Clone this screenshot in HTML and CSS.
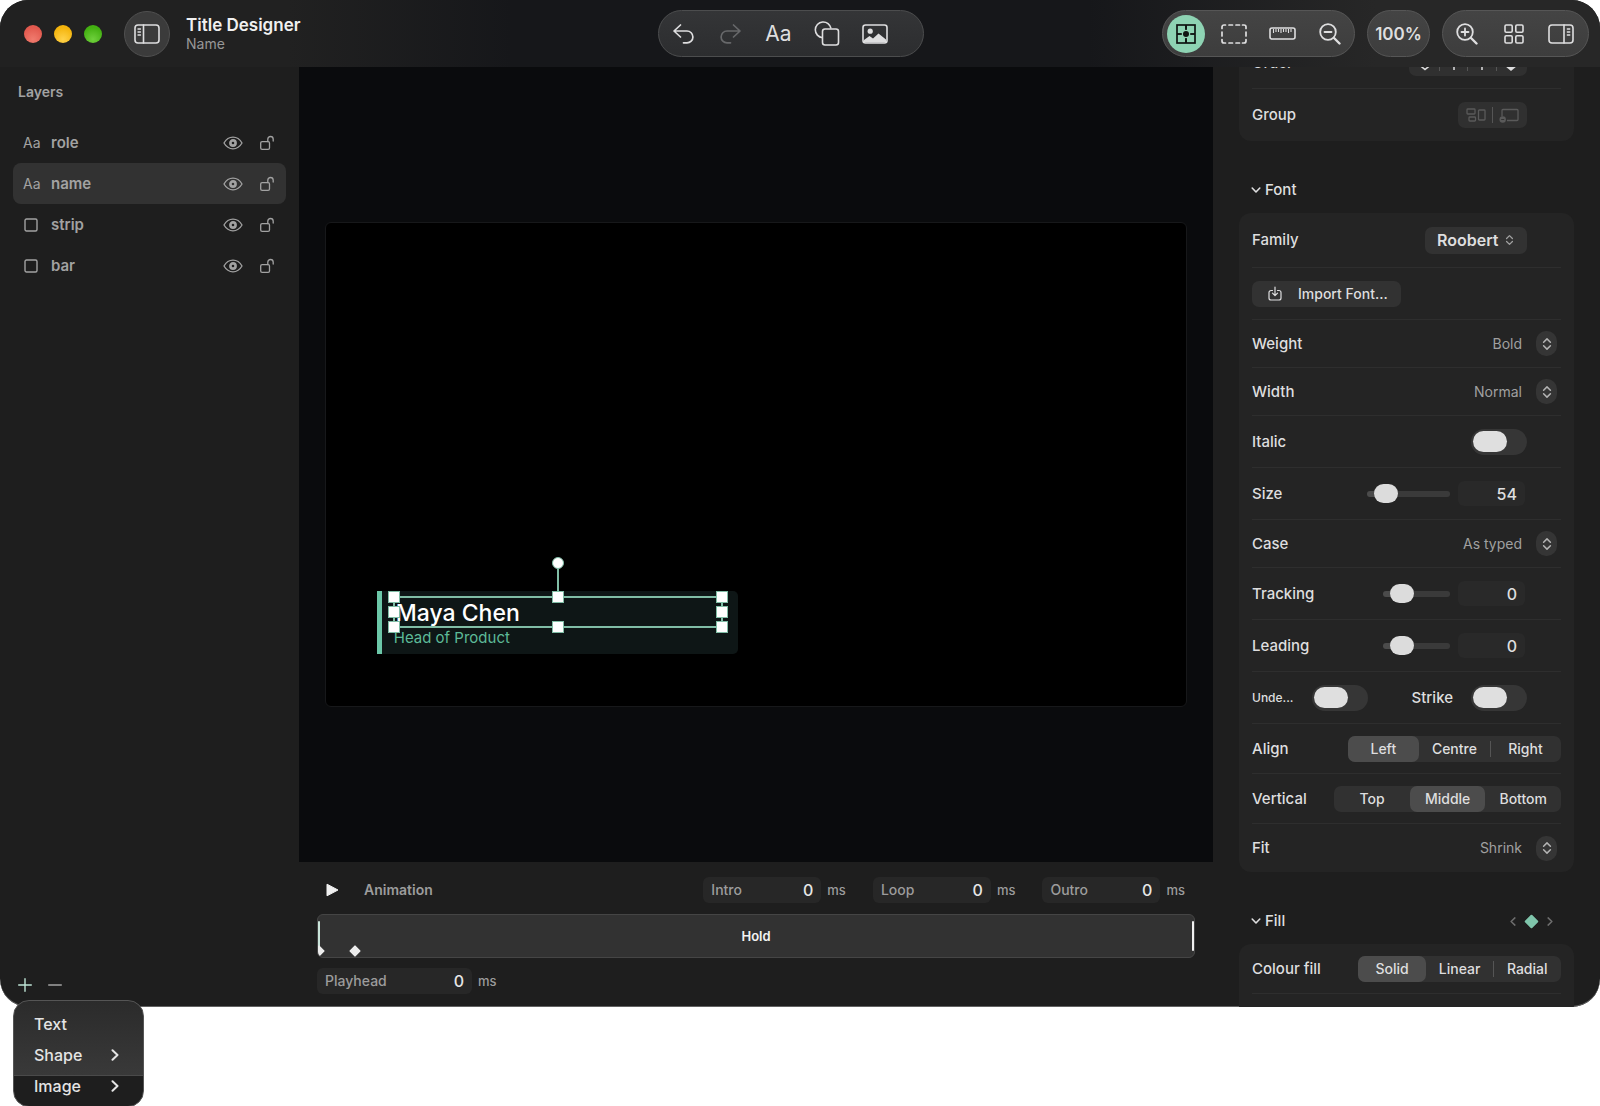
FILE: index.html
```html
<!DOCTYPE html>
<html lang="en">
<head>
<meta charset="utf-8">
<title>Title Designer</title>
<link rel="stylesheet" href="styles.css">
</head>
<body>
<svg class="sprite" aria-hidden="true">
  <symbol id="eye" viewBox="0 0 20 14"><path d="M1 7C3.300 3 6.500 1.200 10 1.200S16.700 3 19 7C16.700 11 13.500 12.800 10 12.800S3.300 11 1 7Z" fill="none" stroke="currentColor" stroke-width="1.300"/><circle cx="10" cy="7" r="2.600" fill="none" stroke="currentColor" stroke-width="2.600"/></symbol>
  <symbol id="lock" viewBox="0 0 16 16"><rect x="1.700" y="6.700" width="8.800" height="7.600" rx="1.400" fill="none" stroke="currentColor" stroke-width="1.300"/><path d="M8.800 6.500V4.200a2.700 2.700 0 0 1 5.400 0V6" fill="none" stroke="currentColor" stroke-width="1.300" stroke-linecap="round"/></symbol>
  <symbol id="square" viewBox="0 0 14 14"><rect x="1" y="1" width="12" height="12" rx="1.500" fill="none" stroke="currentColor" stroke-width="1.400"/></symbol>
  <symbol id="updown" viewBox="0 0 10 14"><path d="M1.600 5.200 5 1.900l3.400 3.300M1.600 8.800 5 12.100l3.400-3.300" fill="none" stroke="currentColor" stroke-width="1.500" stroke-linecap="round" stroke-linejoin="round"/></symbol>
  <symbol id="down" viewBox="0 0 10 8"><path d="M1.200 2 5 6l3.800-4" fill="none" stroke="currentColor" stroke-width="1.600" stroke-linecap="round" stroke-linejoin="round"/></symbol>
  <symbol id="right" viewBox="0 0 8 12"><path d="M1.500 1.200 6.500 6l-5 4.800" fill="none" stroke="currentColor" stroke-width="2" stroke-linecap="round" stroke-linejoin="round"/></symbol>
  <symbol id="diamond" viewBox="0 0 16 16"><rect x="3.200" y="3.200" width="9.600" height="9.600" rx="1" transform="rotate(45 8 8)" fill="currentColor"/></symbol>
</svg>

<div class="window">
  <header class="toolbar">
    <div class="toolbar-left">
      <div class="lights">
        <button class="light light-close" aria-label="Close"></button>
        <button class="light light-min" aria-label="Minimise"></button>
        <button class="light light-zoom" aria-label="Zoom"></button>
      </div>
      <button class="round-btn" aria-label="Toggle sidebar">
        <svg width="26" height="20" viewBox="0 0 26 20" fill="none" stroke="currentColor" stroke-width="1.600" stroke-linecap="round"><rect x="1" y="1" width="24" height="18" rx="3"/><path d="M9.500 1v18"/><path d="M4 5h2.500M4 8h2.500M4 11h2.500" stroke-width="1.300"/></svg>
      </button>
      <div class="titles">
        <h1>Title Designer</h1>
        <p>Name</p>
      </div>
    </div>

    <div class="pill pill-tools">
      <button aria-label="Undo"><svg width="22" height="22" viewBox="0 0 22 22" fill="none" stroke="currentColor" stroke-width="1.700" stroke-linecap="round" stroke-linejoin="round"><path d="M8.500 2 2 8l6.500 6M2.500 8H15a5.800 5.800 0 0 1 0 11.800h-3.500"/></svg></button>
      <button class="off" aria-label="Redo"><svg width="22" height="22" viewBox="0 0 22 22" fill="none" stroke="currentColor" stroke-width="1.700" stroke-linecap="round" stroke-linejoin="round"><path d="M13.500 2 20 8l-6.500 6M19.500 8H7a5.800 5.800 0 0 0 0 11.800h3.500"/></svg></button>
      <button class="text-tool" aria-label="Add text">Aa</button>
      <button aria-label="Add shape"><svg width="26" height="26" viewBox="0 0 26 26" fill="none" stroke="currentColor" stroke-width="1.600"><path d="M8.500 16.700A7.900 7.900 0 1 1 17 7.500"/><rect x="8.500" y="8" width="16" height="16" rx="2.500"/></svg></button>
      <button aria-label="Add image"><svg width="26" height="20" viewBox="0 0 26 20"><rect x="1" y="1" width="24" height="18" rx="2.500" fill="none" stroke="currentColor" stroke-width="1.600"/><circle cx="8.200" cy="7.200" r="2.600" fill="currentColor"/><path d="M2 16l5.500-4 3.500 2.500L16.500 9.500 24 15.500V18.500H2Z" fill="currentColor"/></svg></button>
    </div>

    <div class="toolbar-right">
      <div class="pill">
        <button class="is-on" aria-label="Snap to guides"><svg width="20" height="20" viewBox="0 0 20 20" fill="none" stroke="currentColor" stroke-width="1.700"><rect x="1" y="1" width="18" height="18"/><path d="M10 1v18M1 10h18"/><circle cx="10" cy="10" r="5.200" fill="#8ed3b3" stroke="none"/><circle cx="10" cy="10" r="3" fill="currentColor" stroke="none"/><path d="M10 1v5M10 14v5M1 10h5M14 10h5"/></svg></button>
        <button aria-label="Safe area"><svg width="26" height="20" viewBox="0 0 26 20" fill="none" stroke="currentColor" stroke-width="1.700" stroke-linecap="round"><path d="M1 4.500V3a2 2 0 0 1 2-2h1.500M21.500 1H23a2 2 0 0 1 2 2v1.500M25 15.500V17a2 2 0 0 1-2 2h-1.500M4.500 19H3a2 2 0 0 1-2-2v-1.500M8 1h3.500M15 1h3.500M8 19h3.500M15 19h3.500M1 8v4M25 8v4"/></svg></button>
        <button aria-label="Rulers"><svg width="27" height="13" viewBox="0 0 27 13" fill="none" stroke="currentColor"><rect x="1" y="1" width="25" height="11" rx="2" stroke-width="1.600"/><path d="M4.500 2v4M7 2v3M9.500 2v3M12 2v4M14.500 2v3M17 2v3M19.500 2v4M22 2v3" stroke-width="1.100"/></svg></button>
        <button aria-label="Zoom out"><svg width="22" height="22" viewBox="0 0 22 22" fill="none" stroke="currentColor" stroke-width="1.800" stroke-linecap="round"><circle cx="9" cy="9" r="7.800"/><path d="M5.500 9h7"/><path d="m15 15 5.500 5.500" stroke-width="2.400"/></svg></button>
      </div>
      <button class="pill zoom-level">100%</button>
      <div class="pill pill-end">
        <button aria-label="Zoom in"><svg width="22" height="22" viewBox="0 0 22 22" fill="none" stroke="currentColor" stroke-width="1.800" stroke-linecap="round"><circle cx="9" cy="9" r="7.800"/><path d="M5.500 9h7M9 5.500v7"/><path d="m15 15 5.500 5.500" stroke-width="2.400"/></svg></button>
        <button aria-label="Grid"><svg width="20" height="20" viewBox="0 0 20 20" fill="none" stroke="currentColor" stroke-width="1.600"><rect x="1" y="1" width="7.200" height="7.200" rx="1.200"/><rect x="11.800" y="1" width="7.200" height="7.200" rx="1.200"/><rect x="1" y="11.800" width="7.200" height="7.200" rx="1.200"/><rect x="11.800" y="11.800" width="7.200" height="7.200" rx="1.200"/></svg></button>
        <button aria-label="Toggle inspector"><svg width="26" height="20" viewBox="0 0 26 20" fill="none" stroke="currentColor" stroke-width="1.600" stroke-linecap="round"><rect x="1" y="1" width="24" height="18" rx="3"/><path d="M16 1v18"/><path d="M19.300 5h2.500M19.300 8h2.500M19.300 11h2.500" stroke-width="1.300"/></svg></button>
      </div>
    </div>
  </header>

  <aside class="layers">
    <h2>Layers</h2>
    <ul>
      <li><span class="kind">Aa</span><span class="layer-name">role</span><button aria-label="Hide role"><svg width="20" height="14"><use href="#eye"/></svg></button><button aria-label="Lock role"><svg width="16" height="16"><use href="#lock"/></svg></button></li>
      <li class="selected"><span class="kind">Aa</span><span class="layer-name">name</span><button aria-label="Hide name"><svg width="20" height="14"><use href="#eye"/></svg></button><button aria-label="Lock name"><svg width="16" height="16"><use href="#lock"/></svg></button></li>
      <li><span class="kind"><svg width="14" height="14"><use href="#square"/></svg></span><span class="layer-name">strip</span><button aria-label="Hide strip"><svg width="20" height="14"><use href="#eye"/></svg></button><button aria-label="Lock strip"><svg width="16" height="16"><use href="#lock"/></svg></button></li>
      <li><span class="kind"><svg width="14" height="14"><use href="#square"/></svg></span><span class="layer-name">bar</span><button aria-label="Hide bar"><svg width="20" height="14"><use href="#eye"/></svg></button><button aria-label="Lock bar"><svg width="16" height="16"><use href="#lock"/></svg></button></li>
    </ul>
    <footer class="layer-actions">
      <button class="add" aria-label="Add layer"><svg width="14" height="14" viewBox="0 0 14 14" stroke="currentColor" stroke-width="1.400" stroke-linecap="round"><path d="M7 .7v12.600M.7 7h12.600"/></svg></button>
      <button aria-label="Remove layer"><svg width="14" height="14" viewBox="0 0 14 14" stroke="currentColor" stroke-width="1.400" stroke-linecap="round"><path d="M.7 7h12.600"/></svg></button>
      <div class="menu">
        <button>Text</button>
        <button>Shape<svg width="8" height="12"><use href="#right"/></svg></button>
        <button>Image<svg width="8" height="12"><use href="#right"/></svg></button>
      </div>
    </footer>
  </aside>

  <main class="stage">
    <div class="artboard">
      <div class="lower-third">
        <div class="person">Maya Chen</div>
        <div class="role">Head of Product</div>
        <div class="selection">
          <i class="stem"></i><i class="handle rotate"></i>
          <i class="handle nw"></i><i class="handle n"></i><i class="handle ne"></i>
          <i class="handle w"></i><i class="handle e"></i>
          <i class="handle sw"></i><i class="handle s"></i><i class="handle se"></i>
        </div>
      </div>
    </div>
  </main>

  <section class="timeline">
    <div class="time-row">
      <button class="play" aria-label="Play"><svg width="13" height="14" viewBox="0 0 13 14"><path d="M1 1.200v11.600L12 7Z" fill="currentColor" stroke="currentColor" stroke-linejoin="round"/></svg></button>
      <h2>Animation</h2>
      <div class="timing"><label class="field">Intro<input value="0"></label><span>ms</span></div>
      <div class="timing"><label class="field">Loop<input value="0"></label><span>ms</span></div>
      <div class="timing"><label class="field">Outro<input value="0"></label><span>ms</span></div>
    </div>
    <div class="track">
      <i class="edge edge-start"></i>
      <svg class="key key-first" width="14" height="14"><use href="#diamond"/></svg>
      <svg class="key key-second" width="14" height="14"><use href="#diamond"/></svg>
      Hold
      <i class="edge edge-end"></i>
    </div>
    <div class="timing playhead"><label class="field">Playhead<input value="0"></label><span>ms</span></div>
  </section>

  <aside class="inspector">
    <div class="card card-arrange">
      <div class="row">
        <span>Order</span>
        <div class="icon-seg inset order">
          <button aria-label="Send to back"><svg width="16" height="18" viewBox="0 0 16 18" fill="none" stroke="currentColor" stroke-width="1.500"><path d="M8 1v9M3 11.500l5 4 5-4"/></svg></button><i></i>
          <button aria-label="Send backward"><svg width="16" height="16" viewBox="0 0 16 16" fill="none" stroke="currentColor" stroke-width="1.500"><path d="M8 15V1M4 5l4-4 4 4"/></svg></button><i></i>
          <button aria-label="Bring forward"><svg width="16" height="16" viewBox="0 0 16 16" fill="none" stroke="currentColor" stroke-width="1.500"><path d="M8 15V1M4 5l4-4 4 4"/></svg></button><i></i>
          <button aria-label="Bring to front"><svg width="16" height="18" viewBox="0 0 16 18" fill="currentColor"><path d="M2 12l6 5 6-5-6-4Z"/></svg></button>
        </div>
      </div>
      <div class="row">
        <span>Group</span>
        <div class="icon-seg inset dim">
          <button aria-label="Group"><svg width="20" height="14" viewBox="0 0 20 14" fill="none" stroke="currentColor" stroke-width="1.300"><rect x="1" y="1" width="8" height="5" rx=".8"/><rect x="3" y="9" width="6.500" height="4" rx=".8"/><rect x="12.500" y="2" width="6.500" height="10" rx=".8"/></svg></button><i></i>
          <button aria-label="Ungroup"><svg width="20" height="15" viewBox="0 0 20 15"><path d="M3 8.500V2.500A1 1 0 0 1 4 1.500H18a1 1 0 0 1 1 1v9a1 1 0 0 1-1 1H8" fill="none" stroke="currentColor" stroke-width="1.300"/><circle cx="3.700" cy="11.500" r="3.200" fill="currentColor"/><path d="M2.200 11.500h3" stroke="#333"/></svg></button>
        </div>
      </div>
    </div>

    <h2 class="section-title"><svg width="10" height="8"><use href="#down"/></svg>Font</h2>
    <div class="card">
      <div class="row row-tall">
        <label for="family">Family</label>
        <div class="family inset"><select id="family"><option>Roobert</option></select><svg width="9" height="12"><use href="#updown"/></svg></div>
      </div>
      <div class="row">
        <button class="import"><svg width="14" height="16" viewBox="0 0 14 16" fill="none" stroke="currentColor" stroke-width="1.200" stroke-linecap="round" stroke-linejoin="round"><path d="M4.500 4.500H3a2 2 0 0 0-2 2V12a2 2 0 0 0 2 2h8a2 2 0 0 0 2-2V6.500a2 2 0 0 0-2-2H9.500M7 1v8.500M4.500 7.200 7 9.700l2.500-2.500"/></svg>Import Font...</button>
      </div>
      <div class="row row-select">
        <label for="weight">Weight</label>
        <div class="picker"><select id="weight"><option>Bold</option></select><span class="stepper"><svg width="10" height="14"><use href="#updown"/></svg></span></div>
      </div>
      <div class="row row-select">
        <label for="width">Width</label>
        <div class="picker"><select id="width"><option>Normal</option></select><span class="stepper"><svg width="10" height="14"><use href="#updown"/></svg></span></div>
      </div>
      <div class="row">
        <label for="italic">Italic</label>
        <input class="switch inset" type="checkbox" id="italic">
      </div>
      <div class="row">
        <label for="size">Size</label>
        <div class="measure inset"><input class="slider slider-long" type="range" id="size" value="12"><input class="number" value="54" aria-label="Size value"></div>
      </div>
      <div class="row row-select">
        <label for="case">Case</label>
        <div class="picker"><select id="case"><option>As typed</option></select><span class="stepper"><svg width="10" height="14"><use href="#updown"/></svg></span></div>
      </div>
      <div class="row">
        <label for="tracking">Tracking</label>
        <div class="measure inset"><input class="slider" type="range" id="tracking" value="16"><input class="number" value="0" aria-label="Tracking value"></div>
      </div>
      <div class="row">
        <label for="leading">Leading</label>
        <div class="measure inset"><input class="slider" type="range" id="leading" value="16"><input class="number" value="0" aria-label="Leading value"></div>
      </div>
      <div class="row row-switches">
        <label class="small" for="underline">Unde...</label>
        <input class="switch" type="checkbox" id="underline">
        <label class="strike" for="strike">Strike</label>
        <input class="switch inset" type="checkbox" id="strike">
      </div>
      <div class="row row-seg">
        <span>Align</span>
        <div class="seg"><button class="on">Left</button><button>Centre</button><button class="rule">Right</button></div>
      </div>
      <div class="row row-seg">
        <span>Vertical</span>
        <div class="seg seg-wide"><button>Top</button><button class="on">Middle</button><button>Bottom</button></div>
      </div>
      <div class="row row-select">
        <label for="fit">Fit</label>
        <div class="picker"><select id="fit"><option>Shrink</option></select><span class="stepper"><svg width="10" height="14"><use href="#updown"/></svg></span></div>
      </div>
    </div>

    <h2 class="section-title"><svg width="10" height="8"><use href="#down"/></svg>Fill
      <span class="keys">
        <button aria-label="Previous keyframe"><svg class="flip" width="6" height="9" viewBox="0 0 8 12"><use href="#right"/></svg></button>
        <button class="mint" aria-label="Keyframe"><svg width="17" height="17"><use href="#diamond"/></svg></button>
        <button aria-label="Next keyframe"><svg width="6" height="9" viewBox="0 0 8 12"><use href="#right"/></svg></button>
      </span>
    </h2>
    <div class="card">
      <div class="row row-seg">
        <span>Colour fill</span>
        <div class="seg"><button class="on">Solid</button><button>Linear</button><button class="rule">Radial</button></div>
      </div>
      <div class="row"></div>
    </div>
  </aside>
</div>
</body>
</html>
```

FILE: styles.css
```css
* { box-sizing: border-box; }

body {
  display: flex;
  flex-direction: column;
  height: 100vh;
  margin: 0;
  padding-bottom: 99px;
  background: #fff;
  color: #dededf;
  font: 500 14px/20px Inter, "Liberation Sans", sans-serif;
}

h1, h2, p, ul { margin: 0; padding: 0; }
h2 { font-size: 14px; line-height: 20px; }
ul { list-style: none; }
svg { display: block; flex: none; }

button, input, select {
  margin: 0;
  padding: 0;
  border: 0;
  background: none;
  color: inherit;
  font: inherit;
}

.sprite { position: absolute; width: 0; height: 0; }

.window {
  display: grid;
  flex: 1;
  min-height: 0;
  grid-template: 67px minmax(0, 1fr) 145px / 299px minmax(0, 1fr) 387px;
  grid-template-areas:
    "bar bar bar"
    "layers stage inspector"
    "layers timeline inspector";
  border-radius: 28px;
  background: #1e1e1e;
  box-shadow: inset 0 -1px #626262;
}

/* Toolbar */
.toolbar {
  grid-area: bar;
  display: grid;
  grid-template-columns: 1fr auto 1fr;
  align-items: center;
  padding-right: 11px;
  border-radius: 28px 28px 0 0;
  background: linear-gradient(90deg, #212121 0 18%, #16171a 32% 68%, #272727 86%);
}

.toolbar-left { display: flex; align-items: center; padding-left: 24px; }
.lights { display: flex; gap: 12px; margin-right: 22px; }
.light { width: 18px; height: 18px; border-radius: 50%; }
.light-close { background: radial-gradient(circle at 50% 80%, #f07b6e, #e2594e 70%); }
.light-min { background: radial-gradient(circle at 50% 80%, #ffd24a, #f4b40c 70%); }
.light-zoom { background: radial-gradient(circle at 50% 80%, #6fd03c, #43b011 70%); }

.round-btn {
  display: grid;
  place-items: center;
  width: 46px;
  height: 46px;
  margin-right: 16px;
  border: 1px solid #505050;
  border-radius: 50%;
  background: #3b3b3b;
}

.titles h1 { font-size: 17px; line-height: 20px; font-weight: 600; color: #f0f0f0; }
.titles p { font-size: 14px; line-height: 18px; font-weight: 400; color: #979797; }

.pill {
  display: flex;
  align-items: center;
  height: 47px;
  border: 1px solid #4c4d4e;
  border-radius: 24px;
  background: linear-gradient(#3a3a3b, #333435);
}
.pill button { display: grid; place-items: center; width: 48px; height: 38px; }
.pill-tools { margin-right: 8px; padding-right: 24px; background: linear-gradient(#343537, #2c2d2f); }
.pill .off { color: #67686a; }
.pill .text-tool { font-size: 21px; font-weight: 400; }

.toolbar-right { display: flex; justify-content: flex-end; gap: 12px; }
.toolbar-right .pill { background: linear-gradient(#444, #3d3d3d); border-color: #565656; }
.pill .is-on { width: 38px; margin: 0 5px 0 4px; border-radius: 50%; background: #8ed3b3; color: #101412; }
.zoom-level { justify-content: center; width: 63px; font-size: 17px; font-weight: 600; }
.pill-end { padding-right: 4px; }
.pill-end button { width: 47px; }

/* Layers */
.layers {
  grid-area: layers;
  display: flex;
  flex-direction: column;
  padding: 15px 13px 0;
  color: #a2a2a2;
}
.layers h2 { margin: 0 5px 20px; font-weight: 600; }
.layers li {
  display: flex;
  align-items: center;
  height: 41px;
  padding: 0 11px 0 10px;
  border-radius: 8px;
}
.layers li.selected { background: #323232; }
.kind { width: 28px; font-weight: 400; }
.kind svg { margin-left: 1px; }
.layer-name { flex: 1; font-size: 15px; font-weight: 600; }
.layers li button { margin-left: 16px; }

.layer-actions { position: relative; display: flex; gap: 16px; margin-top: auto; padding: 0 5px 15px; }
.layer-actions .add { color: #bfe5d6; }

.menu {
  position: absolute;
  z-index: 1;
  top: 22px;
  left: 0;
  display: flex;
  flex-direction: column;
  width: 131px;
  padding: 7px 0 5px;
  border: 1px solid #555;
  border-radius: 16px;
  background: linear-gradient(#2b2b2b, #393939 74px, #4a4a4a 74px 75px, #1e1e1e 75px);
  color: #e4e4e4;
}
.menu button {
  display: flex;
  align-items: center;
  justify-content: space-between;
  height: 31px;
  padding: 0 24px 0 20px;
  font-size: 16px;
}

/* Stage */
.stage { grid-area: stage; display: flex; align-items: center; padding: 0 26px; background: #0a0b0d; }
.artboard {
  position: relative;
  flex: 1;
  aspect-ratio: 16 / 9;
  border: 1px solid #17181a;
  border-radius: 6px;
  background: #000;
}
.lower-third {
  position: absolute;
  left: 5.9%;
  top: 76.2%;
  width: 42%;
  height: 63px;
  padding: 7px 0 0 12px;
  border-left: 5px solid #6cc7a8;
  border-radius: 0 5px 5px 0;
  background: #0e1616;
}
.person { padding-left: 2px; font-size: 23px; line-height: 30px; color: #fff; }
.role { font-size: 15px; line-height: 20px; font-weight: 400; color: #5dba98; }
.selection { position: absolute; left: 11px; right: 15px; top: 5px; height: 32px; border: 2px solid #80bda6; }
.handle { position: absolute; width: 12px; height: 12px; border: 1px solid #80bda6; background: #fff; }
.nw, .n, .ne { top: -7px; }
.w, .e { top: 8px; }
.sw, .s, .se { bottom: -7px; }
.nw, .w, .sw { left: -7px; }
.ne, .e, .se { right: -7px; }
.n, .s, .rotate { left: calc(50% - 6px); }
.rotate { top: -41px; border-radius: 50%; }
.stem { position: absolute; top: -30px; left: calc(50% - 1px); width: 2px; height: 24px; background: #80bda6; }

/* Timeline */
.timeline { grid-area: timeline; padding: 15px 18px 0; color: #9c9c9c; }
.time-row { display: flex; align-items: center; gap: 27px; margin-bottom: 11px; padding-right: 10px; }
.time-row h2 { flex: 1; margin-left: -2px; font-weight: 600; }
.play { margin-left: 9px; color: #f0f0f0; }
.timing { display: flex; align-items: center; gap: 6px; }
.timing span { font-size: 13px; }
.field {
  display: flex;
  align-items: center;
  width: 118px;
  height: 26px;
  padding: 0 8px;
  border-radius: 6px;
  background: #272727;
}
.field input { flex: 1; min-width: 0; text-align: right; font-size: 16px; color: #e6e6e6; }
.playhead { margin-top: 10px; }
.playhead .field { width: 155px; }

.track {
  position: relative;
  overflow: hidden;
  height: 44px;
  border: 1px solid #454545;
  border-radius: 6px;
  background: #323232;
  color: #f2f2f2;
  font-size: 13px;
  font-weight: 600;
  line-height: 42px;
  text-align: center;
}
.edge { position: absolute; top: 6px; bottom: 6px; width: 2px; border-radius: 1px; background: #f0f0f0; }
.edge-start { left: 0; background: #c9e5da; }
.edge-end { right: 0; }
.key { position: absolute; bottom: -1px; color: #ececec; }
.key-first { left: -6px; }
.key-second { left: 30px; }

/* Inspector */
.inspector { grid-area: inspector; overflow: hidden; padding: 0 26px; border-radius: 0 0 28px 0; }
.card { padding: 0 13px; border-radius: 12px; background: #242424; }
.card-arrange { margin-top: -30px; }
.row {
  display: flex;
  align-items: center;
  justify-content: space-between;
  height: 52px;
  border-bottom: 1px solid #2e2e2e;
  font-size: 15px;
}
.row:last-child { border-bottom: 0; }
.row-tall { height: 55px; }
.row-select { height: 48px; }
.row-seg { height: 50px; }
.inset { margin-right: 34px; }

.section-title { display: flex; align-items: center; gap: 4px; padding: 38px 0 12px 12px; font-size: 15px; font-weight: 500; line-height: 22px; }
.keys { display: flex; align-items: center; gap: 7px; margin: 0 21px 0 auto; color: #6d6d6d; }
.keys .mint { color: #7fc5ab; }
.flip { transform: rotate(180deg); }

.icon-seg { display: flex; align-items: center; gap: 6px; height: 26px; padding: 0 8px; border-radius: 7px; background: #303030; }
.icon-seg i { width: 1px; height: 16px; background: #555; }
.icon-seg.dim { color: #5a5a5a; }
.order { gap: 5px; width: 118px; justify-content: space-between; }

select { appearance: none; }
.family { display: flex; align-items: center; gap: 6px; height: 27px; padding: 0 13px 0 12px; border-radius: 7px; background: #323232; }
.family select { font-size: 16px; font-weight: 600; }
.family svg { color: #a0a0a0; }
.import { display: flex; align-items: center; gap: 16px; height: 26px; padding: 0 13px 0 16px; border-radius: 7px; background: #323232; }
.import, .seg, .picker select { font-size: 14px; }
.picker { display: flex; align-items: center; gap: 14px; margin-right: 4px; color: #a0a0a0; }
.picker select { font-weight: 400; text-align-last: right; }
.stepper { display: grid; place-items: center; width: 21px; height: 25px; border-radius: 10px; background: #353535; color: #b4b4b4; }

.switch { appearance: none; display: flex; align-items: center; width: 56px; height: 26px; padding: 0 2px; border-radius: 13px; background: #363636; }
.switch::before { content: ""; width: 34px; height: 21px; border-radius: 11px; background: #dfdfdf; }
.row-switches .small { width: 60px; font-size: 12px; }
.row-switches .strike { margin-left: auto; margin-right: 18px; }

.measure { display: flex; align-items: center; gap: 8px; padding-right: 2px; }
.slider { appearance: none; width: 67px; height: 6px; border-radius: 3px; background: linear-gradient(90deg, #4b4b4b 20%, #3a3a3a 20%); }
.slider-long { width: 83px; }
.slider::-webkit-slider-thumb { appearance: none; width: 24px; height: 19px; border-radius: 10px; background: #dcdcdc; }
.number { width: 67px; height: 25px; padding-right: 8px; border-radius: 6px; background: #292929; text-align: right; font-size: 16px; }

.seg { display: grid; grid-template-columns: repeat(3, 1fr); height: 26px; border-radius: 7px; background: #313131; }
.seg button { position: relative; padding: 0 13px; border-radius: 7px; }
.seg-wide button { padding: 0 14px; }
.seg .on { background: #4c4c4c; }
.seg .rule::before { content: ""; position: absolute; left: 0; top: 5px; width: 1px; height: 16px; background: #555; }
```
